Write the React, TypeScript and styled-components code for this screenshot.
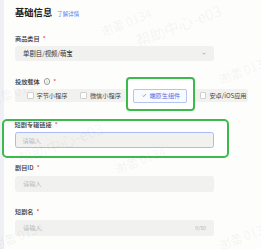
import React from "react";
import styled, { createGlobalStyle, css } from "styled-components";

const Global = createGlobalStyle`
  html, body { margin: 0; padding: 0; background: #fdfdfc; }
  body { font-family: "Noto Sans CJK SC", "Noto Sans", sans-serif; color: #2b2b2b; overflow: hidden; }
`;

const Page = styled.div`
  position: relative;
  display: flex;
  width: 261px;
  height: 249px;
  overflow: hidden;
`;

const SideStrip = styled.div`
  width: 4px;
  flex: none;
  background: #eef0f5;
`;

const Content = styled.div`
  display: flex;
  flex-direction: column;
  align-items: flex-start;
  padding-left: 11px;
  width: 233px;
`;

const TitleRow = styled.div`
  display: flex;
  align-items: baseline;
  gap: 5px;
  margin-top: 7px;
  height: 11px;
  line-height: 11px;
`;

const Title = styled.span`
  font-size: 9.3px;
  font-weight: 700;
  color: #222;
`;

const Link = styled.span`
  font-size: 5.5px;
  color: #4d7ef0;
`;

const Field = styled.div<{ $highlight?: boolean }>`
  display: flex;
  flex-direction: column;
  margin-top: 16.5px;
  ${(p) =>
    p.$highlight &&
    css`
      align-self: flex-start;
      margin: 16.5px 0 -10px -13px;
      padding: 0 13.5px 7.5px 10.5px;
      border: 2.5px solid #3cba4c;
      border-radius: 5px;
      background: #fff;
    `}
`;

const Label = styled.div`
  display: flex;
  align-items: center;
  gap: 2px;
  height: 8px;
  line-height: 8px;
  font-size: 6.2px;
  font-weight: 500;
  color: #333;
  margin-bottom: 3.5px;
`;

const Required = styled.span`
  color: #f04848;
  font-size: 6px;
  margin-left: 1px;
`;

const Info = styled.span`
  display: inline-flex;
  align-items: center;
  justify-content: center;
  width: 4.5px;
  height: 4.5px;
  border-radius: 50%;
  border: 0.7px solid #9a9a9a;
  color: #9a9a9a;
  font-size: 3.5px;
  line-height: 1;
  margin-left: 2px;
`;

const Box = styled.div<{ $focused?: boolean; $h?: number }>`
  box-sizing: border-box;
  display: flex;
  align-items: center;
  justify-content: space-between;
  width: 199px;
  height: ${(p) => p.$h ?? 16}px;
  padding: 0 7px;
  border-radius: 2.5px;
  background: #f1f1ef;
  border: 1px solid ${(p) => (p.$focused ? "#a9bcf4" : "#f1f1ef")};
  font-size: 6.2px;
`;

const Value = styled.span`
  color: #333;
  font-size: 6.4px;
`;

const Placeholder = styled.span`
  color: #b9b9b9;
`;

const Count = styled.span`
  color: #b5b5b5;
  font-size: 5.2px;
`;

const Group = styled.div`
  display: flex;
  align-items: center;
  gap: 13px;
  width: 233px;
  height: 13px;
  padding-left: 12px;
  box-sizing: border-box;
  border-radius: 2px;
  background: #f1f1ef;
  font-size: 6.2px;
  color: #444;
`;

const Option = styled.div`
  display: flex;
  align-items: center;
  gap: 3px;
  white-space: nowrap;
`;

const CheckBox = styled.span`
  width: 4.5px;
  height: 4.5px;
  border: 0.6px solid #cfcfcf;
  border-radius: 1px;
  background: #fff;
`;

const Annotation = styled.div`
  margin: -12px -8px -9px -8px;
  padding: 9.5px 5.5px 6.5px 5.5px;
  border: 2.5px solid #3cba4c;
  border-radius: 4px;
  background: #fff;
`;

const Selected = styled.div`
  box-sizing: border-box;
  display: flex;
  align-items: center;
  gap: 2.5px;
  width: 54px;
  height: 14px;
  padding-left: 8px;
  border: 1px solid #b3c4f5;
  border-radius: 2px;
  background: #fafbff;
  color: #4a6fe0;
  white-space: nowrap;
`;

const Check = styled.svg`
  width: 4.5px;
  height: 4.5px;
`;

const Chevron = styled.svg`
  width: 4px;
  height: 3px;
`;

const WatermarkLayer = styled.div`
  position: absolute;
  inset: 0;
  pointer-events: none;
`;

const Mark = styled.span<{ $size: number }>`
  position: absolute;
  white-space: nowrap;
  transform: rotate(-21deg);
  transform-origin: left bottom;
  font-size: ${(p) => p.$size}px;
  color: rgba(0, 0, 0, 0.055);
`;

const marks = [
  { text: "谢蕾 0134", x: 104, y: 22, s: 12 },
  { text: "帮助中心-e03", x: 140, y: 30, s: 15 },
  { text: "谢蕾 0134", x: -8, y: 92, s: 12 },
  { text: "帮助中心-e03", x: 22, y: 148, s: 15 },
  { text: "谢蕾 0134", x: 118, y: 160, s: 12 },
  { text: "谢蕾 0134", x: 222, y: 70, s: 12 },
  { text: "谢蕾 0134", x: -4, y: 236, s: 12 },
  { text: "谢蕾 0134", x: 222, y: 236, s: 12 },
];

export default function App() {
  return (
    <>
      <Global />
      <Page>
        <SideStrip />
        <Content>
          <TitleRow>
            <Title>基础信息</Title>
            <Link>了解详情</Link>
          </TitleRow>

          <Field>
            <Label>
              商品类目<Required>*</Required>
            </Label>
            <Box $h={15}>
              <Value>单剧目/视频/萌宝</Value>
              <Chevron viewBox="0 0 8 6">
                <path d="M1 1.5 L4 4.5 L7 1.5" fill="none" stroke="#8a8a8a" strokeWidth="1.2" />
              </Chevron>
            </Box>
          </Field>

          <Field>
            <Label>
              投放载体<Info>i</Info>
              <Required>*</Required>
            </Label>
            <Group>
              <Option>
                <CheckBox />
                字节小程序
              </Option>
              <Option>
                <CheckBox />
                微信小程序
              </Option>
              <Annotation>
                <Selected>
                  <Check viewBox="0 0 8 8">
                    <path d="M1 4.2 L3.2 6.3 L7 1.8" fill="none" stroke="#4a6fe0" strokeWidth="1.1" />
                  </Check>
                  端原生组件
                </Selected>
              </Annotation>
              <Option>
                <CheckBox />
                安卓/iOS应用
              </Option>
            </Group>
          </Field>

          <Field $highlight>
            <Label>
              短剧专辑链接<Required>*</Required>
            </Label>
            <Box $focused>
              <Placeholder>请输入</Placeholder>
            </Box>
          </Field>

          <Field>
            <Label>
              剧目ID<Required>*</Required>
            </Label>
            <Box>
              <Placeholder>请输入</Placeholder>
            </Box>
          </Field>

          <Field>
            <Label>
              短剧名<Required>*</Required>
            </Label>
            <Box>
              <Placeholder>请输入</Placeholder>
              <Count>0/50</Count>
            </Box>
          </Field>
        </Content>
        <WatermarkLayer>
          {marks.map((m, i) => (
            <Mark key={i} $size={m.s} style={{ left: m.x, top: m.y }}>
              {m.text}
            </Mark>
          ))}
        </WatermarkLayer>
      </Page>
    </>
  );
}
